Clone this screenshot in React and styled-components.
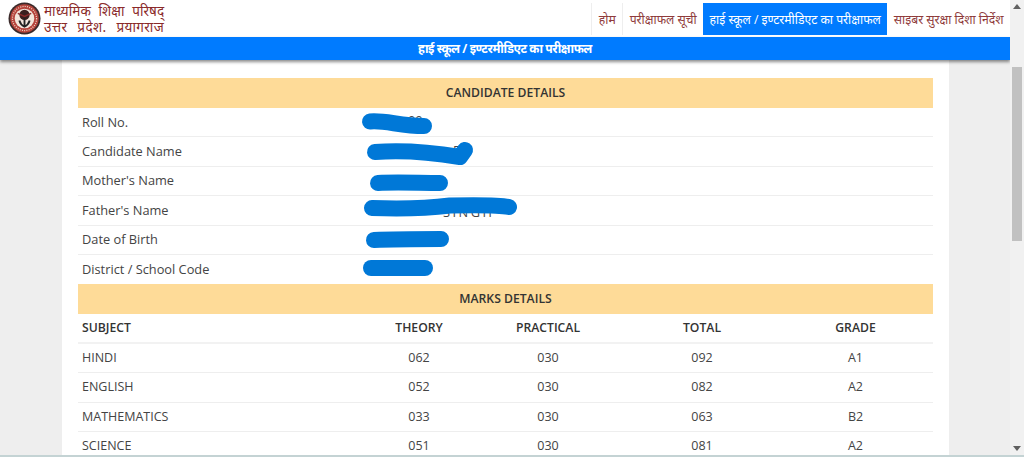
import React from "react";
import styled, { createGlobalStyle } from "styled-components";

const Global = createGlobalStyle`
  html, body { margin: 0; padding: 0; height: 457px; overflow: hidden; background: #eee; }
  #root { height: 457px; }
  * { box-sizing: border-box; }
`;

const Page = styled.div`
  display: flex;
  height: 457px;
  font-family: "Open Sans", "Noto Sans", sans-serif;
  border-bottom: 2px solid #c4d3d4;
`;
const Main = styled.div`
  width: 1010px;
  display: flex;
  flex-direction: column;
  overflow: hidden;
`;
const TopBar = styled.header`
  height: 37px;
  flex: none;
  background: #fff;
  display: flex;
  justify-content: space-between;
`;
const Brand = styled.div`
  display: flex;
  align-items: center;
  gap: 3px;
  padding-left: 8px;
`;
const BrandText = styled.div`
  font-family: "Noto Sans", "Liberation Serif", serif;
  font-size: 13.5px;
  line-height: 16px;
  color: #8a2a2a;
  white-space: nowrap;
`;
const BrandLine = styled.div`
  letter-spacing: ${(p) => p.$track};
  word-spacing: ${(p) => p.$words};
`;
const Nav = styled.nav`
  display: flex;
  padding: 3px 0 2px;
`;
const NavItem = styled.a`
  display: flex;
  align-items: center;
  padding: 0 6.5px;
  font-size: 12.2px;
  white-space: nowrap;
  color: ${(p) => (p.$active ? "#fff" : "#8f3b3b")};
  background: ${(p) => (p.$active ? "#007bff" : "transparent")};
  border-right: ${(p) => (p.$divider ? "1px solid #eee" : "0")};
  border-left: ${(p) => (p.$first ? "1px solid #eee" : "0")};
`;
const TitleBar = styled.div`
  height: 23px;
  flex: none;
  background: #007bff;
  color: #fff;
  font-size: 12.2px;
  letter-spacing: -0.45px;
  font-weight: 700;
  display: flex;
  align-items: center;
  justify-content: center;
  box-shadow: 0 2px 3px rgba(0, 0, 0, 0.45);
  position: relative;
`;
const Card = styled.main`
  flex: 1;
  margin: 0 61px 0 62px;
  background: #fff;
  padding: 18px 16px 0;
  overflow: hidden;
`;
const Band = styled.div`
  height: 30px;
  padding-bottom: 2px;
  background: #fedb98;
  color: #333;
  font-size: 12.2px;
  font-weight: 600;
  display: flex;
  align-items: center;
  justify-content: center;
`;
const Details = styled.div`
  position: relative;
`;
const DetailRow = styled.div`
  display: grid;
  grid-template-columns: 285px 1fr;
  height: 29.4px;
  align-items: center;
  padding: 0 0 1px 4px;
  font-size: 12.8px;
  color: #444;
  border-bottom: ${(p) => (p.$last ? "0" : "1px solid #eee")};
`;
const Peek = styled.span`
  color: #444;
  padding-left: ${(p) => p.$x}px;
  letter-spacing: ${(p) => p.$track}px;
  transform: translateY(${(p) => p.$y}px);
`;
const Scribbles = styled.svg`
  position: absolute;
  left: 0;
  top: 0;
  width: 855px;
  height: 176px;
  pointer-events: none;
`;
const MarksRow = styled.div`
  display: grid;
  grid-template-columns: 284px 114px 144px 164px 143px;
  height: 29.4px;
  align-items: center;
  padding-bottom: 1px;
  font-size: ${(p) => (p.$head ? "12.2px" : "12.5px")};
  font-weight: ${(p) => (p.$head ? 600 : 400)};
  color: ${(p) => (p.$head ? "#333" : "#444")};
  border-bottom: ${(p) => (p.$head ? "2px solid #f2f2f2" : "1px solid #eee")};
`;
const SubjectCell = styled.span`
  padding-left: 4px;
`;
const NumCell = styled.span`
  text-align: center;
`;
const ScrollBar = styled.aside`
  width: 14px;
  flex: none;
  background: #f1f1f1;
  display: flex;
  flex-direction: column;
  align-items: center;
  justify-content: space-between;
  padding: 4px 0;
`;
const Thumb = styled.div`
  width: 10px;
  height: 174px;
  background: #c1c1c1;
  margin-top: 58px;
`;
const Arrow = styled.svg`
  width: 8px;
  height: 5px;
  fill: #606060;
  flex: none;
`;
const TrackFill = styled.div`
  flex: 1;
`;

const Seal = () => (
  <svg width="33" height="33" viewBox="0 0 32 32">
    <circle cx="16" cy="16" r="15.5" fill="#3a2a2a" />
    <circle cx="16" cy="16" r="13.8" fill="#b5443c" />
    <circle cx="16" cy="16" r="9.5" fill="#f3e6dc" />
    <circle cx="16" cy="12.5" r="5" fill="#3a1f1f" />
    <path d="M9.5 11 L16 14 L22.5 11" stroke="#8a2a2a" strokeWidth="1.5" fill="none" />
    <path d="M16 15 V24 M11 18 C12 22 14 23 16 24 C18 23 20 22 21 18" stroke="#222" strokeWidth="1.8" fill="none" />
    <circle cx="16" cy="16" r="11.7" fill="none" stroke="#f0d8c8" strokeWidth="1.2" strokeDasharray="1 1.2" />
  </svg>
);

const details = [
  { label: "Roll No.", peek: "00", x: 41, y: -2 },
  { label: "Candidate Name", peek: "F", x: 86, y: -1 },
  { label: "Mother's Name" },
  { label: "Father's Name", peek: "SINGH", x: 76, y: 1.5, track: 2.5 },
  { label: "Date of Birth" },
  { label: "District / School Code" },
];
const marks = [
  ["HINDI", "062", "030", "092", "A1"],
  ["ENGLISH", "052", "030", "082", "A2"],
  ["MATHEMATICS", "033", "030", "063", "B2"],
  ["SCIENCE", "051", "030", "081", "A2"],
];

export default function App() {
  return (
    <Page>
      <Global />
      <Main>
        <TopBar>
          <Brand>
            <Seal />
            <BrandText>
              <BrandLine $track="0.1px" $words="4px">माध्यमिक शिक्षा परिषद्</BrandLine>
              <BrandLine $track="0.4px" $words="6px">उत्तर प्रदेश. प्रयागराज</BrandLine>
            </BrandText>
          </Brand>
          <Nav>
            <NavItem $first $divider>होम</NavItem>
            <NavItem>परीक्षाफल सूची</NavItem>
            <NavItem $active>हाई स्कूल / इण्टरमीडिएट का परीक्षाफल</NavItem>
            <NavItem>साइबर सुरक्षा दिशा निर्देश</NavItem>
          </Nav>
        </TopBar>
        <TitleBar>हाई स्कूल / इण्टरमीडिएट का परीक्षाफल</TitleBar>
        <Card>
          <Band>CANDIDATE DETAILS</Band>
          <Details>
            {details.map((d, i) => (
              <DetailRow key={d.label} $last={i === details.length - 1}>
                <span>{d.label}</span>
                <Peek $x={d.x || 0} $y={d.y || 0} $track={d.track || 0}>{d.peek}</Peek>
              </DetailRow>
            ))}
            <Scribbles viewBox="78 108 855 176">
              <g fill="none" stroke="#0078d7" strokeWidth="16" strokeLinecap="round" strokeLinejoin="round">
                <path d="M370 121.5 C385 120 400 126 424 126" />
                <path d="M375 152 C400 150 430 152 460 157 L465 150" />
                <path d="M378 183 C395 182 420 183 440 183" />
                <path d="M372 208 C400 209 430 208 450 205.5 C475 205 500 205 509 207" />
                <path d="M374 240 C395 239 420 239 441 239" />
                <path d="M371 268 L425 268" />
              </g>
            </Scribbles>
          </Details>
          <Band>MARKS DETAILS</Band>
          <MarksRow $head>
            <SubjectCell>SUBJECT</SubjectCell>
            <NumCell>THEORY</NumCell>
            <NumCell>PRACTICAL</NumCell>
            <NumCell>TOTAL</NumCell>
            <NumCell>GRADE</NumCell>
          </MarksRow>
          {marks.map((m) => (
            <MarksRow key={m[0]}>
              <SubjectCell>{m[0]}</SubjectCell>
              <NumCell>{m[1]}</NumCell>
              <NumCell>{m[2]}</NumCell>
              <NumCell>{m[3]}</NumCell>
              <NumCell>{m[4]}</NumCell>
            </MarksRow>
          ))}
        </Card>
      </Main>
      <ScrollBar>
        <Arrow viewBox="0 0 8 5"><path d="M4 0 L8 5 H0 Z" /></Arrow>
        <Thumb />
        <TrackFill />
        <Arrow viewBox="0 0 8 5"><path d="M4 5 L8 0 H0 Z" /></Arrow>
      </ScrollBar>
    </Page>
  );
}
